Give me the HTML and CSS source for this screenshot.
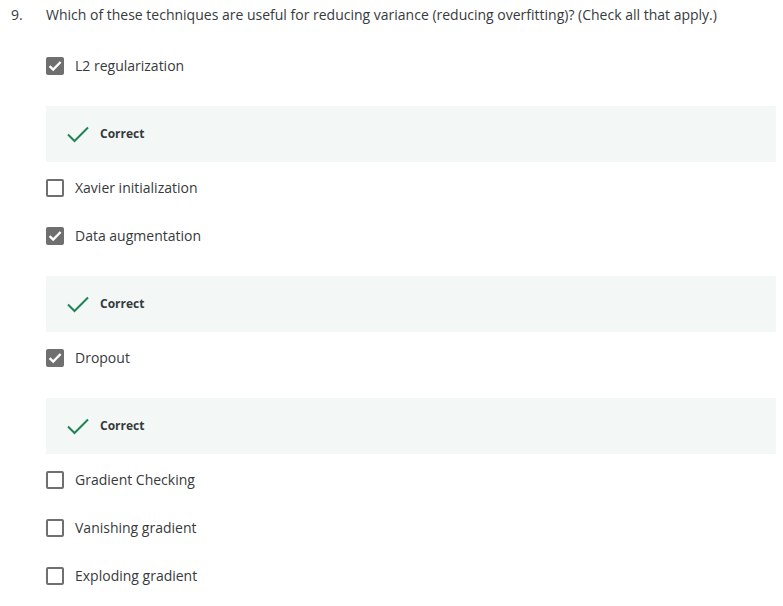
FILE: index.html
```html
<!DOCTYPE html>
<html lang="en">
<head>
<meta charset="utf-8">
<title>Quiz question 9</title>
<link rel="stylesheet" href="styles.css">
</head>
<body>
<div class="question">
  <div class="q-head">
    <span class="q-num">9.</span>
    <span class="q-text">Which of these techniques are useful for reducing variance (reducing overfitting)? (Check all that apply.)</span>
  </div>
  <div class="answers">
    <div class="option first">
      <span class="box checked"><svg viewBox="0 0 18 18" width="18" height="18"><path d="M3.6 9.2 L7.2 12.6 L14.6 5" fill="none" stroke="#fff" stroke-width="2.4"/></svg></span>
      <span class="label">L2 regularization</span>
    </div>
    <div class="feedback">
      <svg class="tick" viewBox="0 0 22 17" width="22" height="17"><path d="M1 8.5 L7.5 15 L21 1.5" fill="none" stroke="#1f8354" stroke-width="2"/></svg>
      <span class="fb-text">Correct</span>
    </div>
    <div class="option">
      <span class="box"></span>
      <span class="label">Xavier initialization</span>
    </div>
    <div class="option">
      <span class="box checked"><svg viewBox="0 0 18 18" width="18" height="18"><path d="M3.6 9.2 L7.2 12.6 L14.6 5" fill="none" stroke="#fff" stroke-width="2.4"/></svg></span>
      <span class="label">Data augmentation</span>
    </div>
    <div class="feedback">
      <svg class="tick" viewBox="0 0 22 17" width="22" height="17"><path d="M1 8.5 L7.5 15 L21 1.5" fill="none" stroke="#1f8354" stroke-width="2"/></svg>
      <span class="fb-text">Correct</span>
    </div>
    <div class="option">
      <span class="box checked"><svg viewBox="0 0 18 18" width="18" height="18"><path d="M3.6 9.2 L7.2 12.6 L14.6 5" fill="none" stroke="#fff" stroke-width="2.4"/></svg></span>
      <span class="label">Dropout</span>
    </div>
    <div class="feedback">
      <svg class="tick" viewBox="0 0 22 17" width="22" height="17"><path d="M1 8.5 L7.5 15 L21 1.5" fill="none" stroke="#1f8354" stroke-width="2"/></svg>
      <span class="fb-text">Correct</span>
    </div>
    <div class="option">
      <span class="box"></span>
      <span class="label">Gradient Checking</span>
    </div>
    <div class="option">
      <span class="box"></span>
      <span class="label">Vanishing gradient</span>
    </div>
    <div class="option">
      <span class="box"></span>
      <span class="label">Exploding gradient</span>
    </div>
  </div>
</div>
</body>
</html>
```

FILE: styles.css
```css
html, body {
  margin: 0;
  padding: 0;
  background: #fff;
}
body {
  font-family: "Open Sans", "Noto Sans", sans-serif;
  font-size: 14px;
  color: #373a3c;
}
.question {
  padding-top: 5px;
}
.q-head {
  display: flex;
  line-height: 20px;
}
.q-num {
  width: 35px;
  padding-left: 11px;
  flex: none;
}
.answers {
  margin-left: 46px;
  margin-right: 7px;
}
.option {
  display: flex;
  align-items: center;
  height: 24px;
  margin-top: 24px;
}
.option.first {
  margin-top: 29px;
}
.feedback + .option {
  margin-top: 14px;
}
.box {
  width: 18px;
  height: 18px;
  box-sizing: border-box;
  border: 2px solid #6f6f6f;
  border-radius: 2px;
  flex: none;
  margin-right: 11px;
  position: relative;
}
.box.checked {
  background: #6f6f6f;
}
.box svg {
  position: absolute;
  left: -2px;
  top: -2px;
}
.label {
  line-height: 20px;
}
.feedback {
  margin-top: 28px;
  height: 56px;
  background: #f3f8f6;
  display: flex;
  align-items: center;
  padding-left: 21px;
}
.tick {
  flex: none;
  margin-right: 11px;
}
.fb-text {
  font-size: 12px;
  font-weight: 700;
  line-height: 16px;
  padding-bottom: 1px;
  color: #373a3c;
}
```
